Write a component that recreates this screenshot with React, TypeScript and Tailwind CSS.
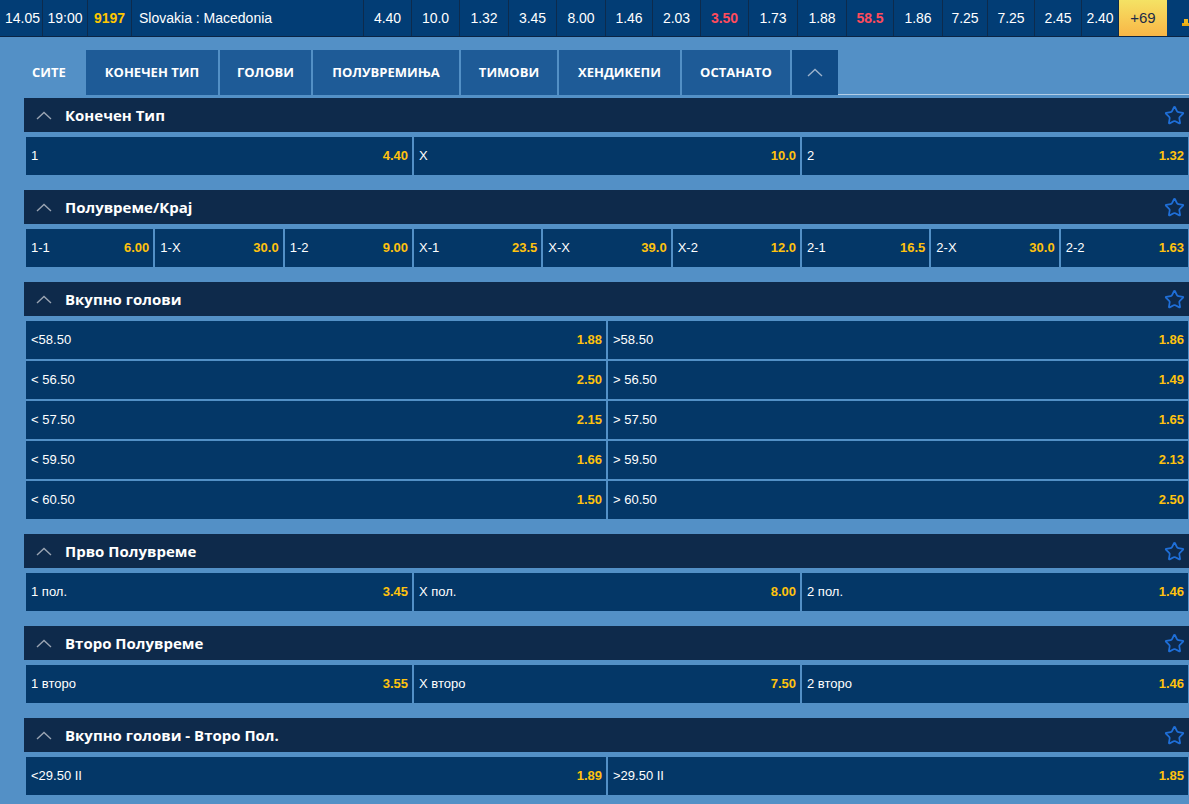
import { Star } from "lucide-react";

type Odd = [string, string];

const topCells: { text: string; w: number; red?: boolean }[] = [
  { text: "4.40", w: 48 },
  { text: "10.0", w: 48 },
  { text: "1.32", w: 49 },
  { text: "3.45", w: 48 },
  { text: "8.00", w: 49 },
  { text: "1.46", w: 47 },
  { text: "2.03", w: 48 },
  { text: "3.50", w: 48, red: true },
  { text: "1.73", w: 49 },
  { text: "1.88", w: 49 },
  { text: "58.5", w: 47, red: true },
  { text: "1.86", w: 49 },
  { text: "7.25", w: 45 },
  { text: "7.25", w: 47 },
  { text: "2.45", w: 47 },
  { text: "2.40", w: 37 },
];

const tabs = [
  { label: "КОНЕЧЕН ТИП", w: "w-[132px]" },
  { label: "ГОЛОВИ", w: "w-[91px]" },
  { label: "ПОЛУВРЕМИЊА", w: "w-[146px]" },
  { label: "ТИМОВИ", w: "w-[96px]" },
  { label: "ХЕНДИКЕПИ", w: "w-[121px]" },
  { label: "ОСТАНАТО", w: "w-[108px]" },
];

const markets: { title: string; cols: string; rows: Odd[][] }[] = [
  {
    title: "Конечен Тип",
    cols: "grid-cols-3",
    rows: [[["1", "4.40"], ["X", "10.0"], ["2", "1.32"]]],
  },
  {
    title: "Полувреме/Крај",
    cols: "grid-cols-9",
    rows: [
      [
        ["1-1", "6.00"], ["1-X", "30.0"], ["1-2", "9.00"],
        ["X-1", "23.5"], ["X-X", "39.0"], ["X-2", "12.0"],
        ["2-1", "16.5"], ["2-X", "30.0"], ["2-2", "1.63"],
      ],
    ],
  },
  {
    title: "Вкупно голови",
    cols: "grid-cols-2",
    rows: [
      [["<58.50", "1.88"], [">58.50", "1.86"]],
      [["< 56.50", "2.50"], ["> 56.50", "1.49"]],
      [["< 57.50", "2.15"], ["> 57.50", "1.65"]],
      [["< 59.50", "1.66"], ["> 59.50", "2.13"]],
      [["< 60.50", "1.50"], ["> 60.50", "2.50"]],
    ],
  },
  {
    title: "Прво Полувреме",
    cols: "grid-cols-3",
    rows: [[["1 пол.", "3.45"], ["X пол.", "8.00"], ["2 пол.", "1.46"]]],
  },
  {
    title: "Второ Полувреме",
    cols: "grid-cols-3",
    rows: [[["1 второ", "3.55"], ["X второ", "7.50"], ["2 второ", "1.46"]]],
  },
  {
    title: "Вкупно голови - Второ Пол.",
    cols: "grid-cols-2",
    rows: [[["<29.50 II", "1.89"], [">29.50 II", "1.85"]]],
  },
];

const Chevron = ({ className }: { className?: string }) => (
  <svg width="16" height="9" viewBox="0 0 16 9" className={className}>
    <polyline points="1,8 8,1.5 15,8" fill="none" stroke="currentColor" strokeWidth="1.4" />
  </svg>
);

const TopBar = () => (
  <div className="flex h-[37px] bg-[#023d75] border-b border-[#0a2444] text-white text-[14px] font-['Liberation_Sans',Arial,sans-serif]">
    <div className="w-[43px] pl-[5px] flex items-center border-r border-[#0d2b4d]">14.05</div>
    <div className="w-[45px] flex items-center justify-center border-r border-[#0d2b4d]">19:00</div>
    <div className="w-[44px] flex items-center justify-center border-r border-[#0d2b4d] font-bold text-[#ffc700]">9197</div>
    <div className="w-[232px] pl-[7px] flex items-center border-r border-[#0d2b4d]">Slovakia : Macedonia</div>
    {topCells.map((c, i) => (
      <div
        key={i}
        style={{ width: c.w }}
        className={`flex items-center justify-center border-r border-[#0d2b4d] ${c.red ? "text-[#ff4b5c] font-bold" : ""}`}
      >
        {c.text}
      </div>
    ))}
    <div className="w-[48px] flex items-center justify-center bg-gradient-to-b from-[#f4e264] to-[#f8b646] text-[#1b2b48] text-[15px]">
      +69
    </div>
    <div className="flex-1 relative">
      <svg width="8" height="7" viewBox="0 0 8 7" className="absolute left-[15px] top-[19px]">
        <rect x="0" y="4" width="8" height="3" fill="#e8a810" />
        <rect x="2" y="0" width="4" height="5" fill="#f0b820" />
      </svg>
    </div>
  </div>
);

const Tabs = () => (
  <div className="flex mt-[13px] h-[45px] pl-[24px] font-['Open_Sans',sans-serif] font-bold text-[13px] text-white">
    <div className="w-[62px] pl-[8px] flex items-center">СИТЕ</div>
    <div className="flex gap-[2px]">
      {tabs.map((t) => (
        <div key={t.label} className={`${t.w} flex items-center justify-center bg-[#1e5b97]`}>
          {t.label}
        </div>
      ))}
      <div className="w-[46px] flex items-center justify-center bg-[#0f4a85] text-[#9db3cc]">
        <Chevron />
      </div>
    </div>
    <div className="flex-1 border-b border-[#b3cde6]" />
  </div>
);

const Market = ({ title, cols, rows }: { title: string; cols: string; rows: Odd[][] }) => (
  <div className="mb-[15px]">
    <div className="h-[34px] w-[1166px] bg-[#0e2a4b] flex items-center justify-between pl-[12px] pr-[5px]">
      <div className="flex items-center">
        <Chevron className="text-[#9aa4b2]" />
        <span className="ml-[13px] text-white font-['Open_Sans',sans-serif] font-bold text-[15px]">{title}</span>
      </div>
      <Star size={21} strokeWidth={2} className="text-[#1f6fd8]" />
    </div>
    <div className="mt-[5px] flex flex-col gap-[2px] pl-[2px] w-[1164px]">
      {rows.map((row, i) => (
        <div key={i} className={`grid ${cols} gap-[2px] h-[38px]`}>
          {row.map(([label, odd]) => (
            <div
              key={label}
              className="bg-[#043767] flex items-center justify-between pl-[5px] pr-[4px] font-['Liberation_Sans',Arial,sans-serif] text-[13px]"
            >
              <span className="text-white">{label}</span>
              <span className="text-[#ffc20e] font-bold">{odd}</span>
            </div>
          ))}
        </div>
      ))}
    </div>
  </div>
);

export default function App() {
  return (
    <div className="w-[1189px] h-[804px] overflow-hidden bg-[#5390c6]">
      <TopBar />
      <Tabs />
      <div className="mt-[3px] pl-[24px]">
        {markets.map((m) => (
          <Market key={m.title} {...m} />
        ))}
      </div>
    </div>
  );
}
